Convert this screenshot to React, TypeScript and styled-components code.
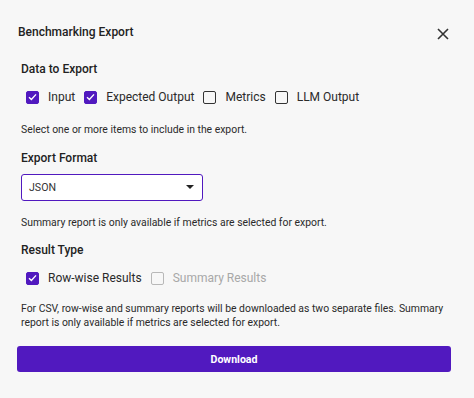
import React from 'react';
import styled, { createGlobalStyle } from 'styled-components';

const GlobalStyle = createGlobalStyle`
  html, body {
    margin: 0;
    padding: 0;
    background: #f7f7f7;
    font-family: Roboto, "Liberation Sans", sans-serif;
    color: #222;
  }
`;

const PURPLE = '#5119bf';

const Dialog = styled.div`
  width: 474px;
  height: 398px;
  box-sizing: border-box;
  padding: 22px 25px 0 17px;
  background: #f7f7f7;
`;

const Header = styled.div`
  display: flex;
  align-items: center;
  justify-content: space-between;
  height: 20px;
  padding-left: 1px;
`;

const Title = styled.h2`
  margin: 0;
  font-size: 12px;
  font-weight: 500;
  color: #222;
`;

const CloseButton = styled.button`
  border: none;
  background: none;
  padding: 0;
  margin-top: 4px;
  width: 12px;
  height: 12px;
  display: flex;
  cursor: pointer;
`;

const Section = styled.div<{ $top: number }>`
  padding-left: 4px;
  margin-top: ${(p) => p.$top}px;
`;

const Label = styled.div`
  font-size: 12px;
  font-weight: 500;
  line-height: 16px;
  color: #222;
`;

const Options = styled.div`
  display: flex;
  align-items: center;
  gap: 9px;
  margin-top: 12px;
  padding-left: 5px;
`;

const Option = styled.label<{ $disabled?: boolean }>`
  display: flex;
  align-items: center;
  gap: 9px;
  font-size: 12px;
  line-height: 16px;
  color: ${(p) => (p.$disabled ? '#a8a8a8' : '#2a2a2a')};
`;

const Box = styled.span<{ $checked?: boolean; $disabled?: boolean }>`
  width: 13px;
  height: 13px;
  box-sizing: border-box;
  border-radius: 2px;
  border: 1.5px solid ${(p) => (p.$checked ? PURPLE : p.$disabled ? '#b8b8b8' : '#333')};
  background: ${(p) => (p.$checked ? PURPLE : 'transparent')};
  display: flex;
  align-items: center;
  justify-content: center;
`;

const Hint = styled.p<{ $top: number }>`
  margin: ${(p) => p.$top}px 0 0;
  font-size: 10.4px;
  line-height: 13.5px;
  color: #2a2a2a;
`;

const Select = styled.div`
  margin-top: 8px;
  width: 182px;
  height: 27px;
  box-sizing: border-box;
  border: 1px solid ${PURPLE};
  border-radius: 3px;
  background: #fff;
  display: flex;
  align-items: center;
  justify-content: space-between;
  padding: 0 7px 0 7px;
  font-size: 10.6px;
  color: #333;
`;

const Caret = styled.span`
  width: 0;
  height: 0;
  border-left: 4px solid transparent;
  border-right: 4px solid transparent;
  border-top: 4px solid #222;
  margin-right: 1px;
`;

const DownloadButton = styled.button`
  margin-top: 17px;
  width: 434px;
  height: 26px;
  border: none;
  border-radius: 3px;
  background: ${PURPLE};
  color: #fff;
  font-family: inherit;
  font-size: 10.6px;
  font-weight: 700;
  cursor: pointer;
`;

function Check({ checked, disabled }: { checked?: boolean; disabled?: boolean }) {
  return (
    <Box $checked={checked} $disabled={disabled}>
      {checked && (
        <svg width="9" height="8" viewBox="0 0 9 8">
          <path d="M1 4.2 L3.4 6.4 L8 1.4" fill="none" stroke="#fff" strokeWidth="1.4" />
        </svg>
      )}
    </Box>
  );
}

const dataItems = [
  { label: 'Input', checked: true },
  { label: 'Expected Output', checked: true },
  { label: 'Metrics', checked: false },
  { label: 'LLM Output', checked: false },
];

export default function App() {
  return (
    <>
      <GlobalStyle />
      <Dialog>
        <Header>
          <Title>Benchmarking Export</Title>
          <CloseButton aria-label="close">
            <svg width="12" height="12" viewBox="0 0 12 12">
              <path d="M1 1 L11 11 M11 1 L1 11" stroke="#333" strokeWidth="1.6" />
            </svg>
          </CloseButton>
        </Header>

        <Section $top={19}>
          <Label>Data to Export</Label>
          <Options>
            {dataItems.map((d) => (
              <Option key={d.label}>
                <Check checked={d.checked} />
                {d.label}
              </Option>
            ))}
          </Options>
          <Hint $top={18}>Select one or more items to include in the export.</Hint>
        </Section>

        <Section $top={13}>
          <Label>Export Format</Label>
          <Select>
            JSON
            <Caret />
          </Select>
          <Hint $top={15}>Summary report is only available if metrics are selected for export.</Hint>
        </Section>

        <Section $top={13}>
          <Label>Result Type</Label>
          <Options>
            <Option>
              <Check checked />
              Row-wise Results
            </Option>
            <Option $disabled>
              <Check disabled />
              Summary Results
            </Option>
          </Options>
          <Hint $top={16}>
            For CSV, row-wise and summary reports will be downloaded as two separate files. Summary
            report is only available if metrics are selected for export.
          </Hint>
        </Section>

        <DownloadButton>Download</DownloadButton>
      </Dialog>
    </>
  );
}
